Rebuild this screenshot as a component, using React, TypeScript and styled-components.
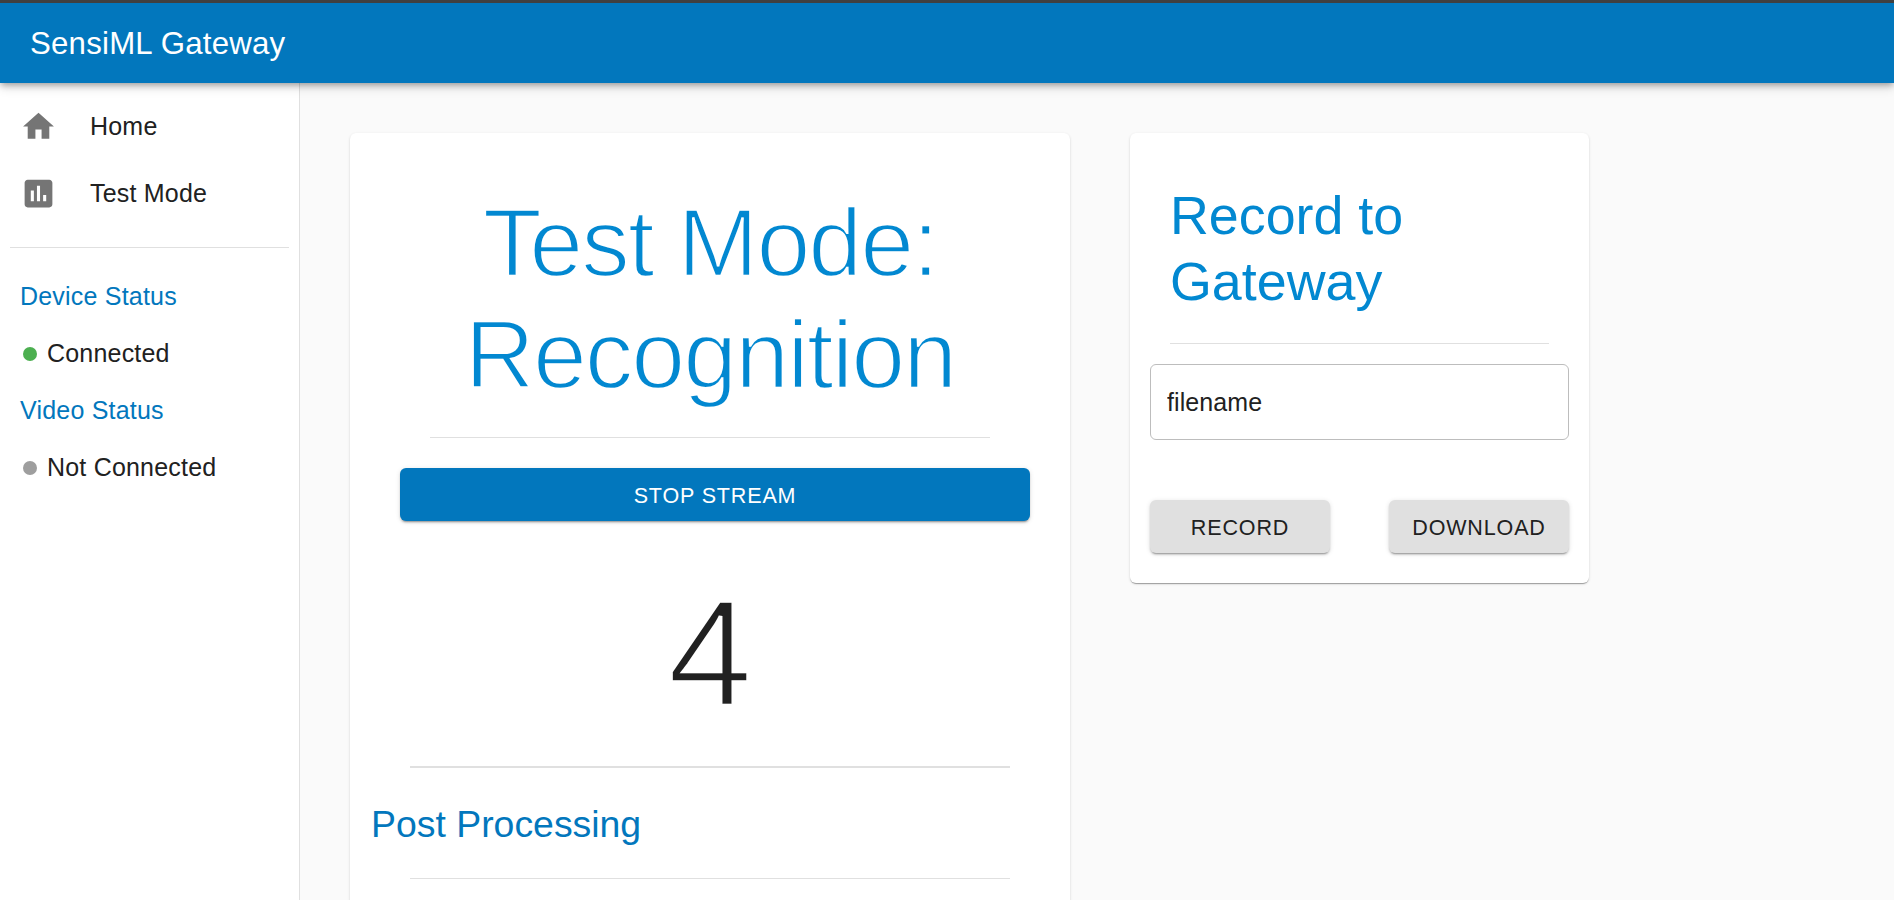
import styled, { createGlobalStyle } from 'styled-components';

const GlobalStyle = createGlobalStyle`
  html, body {
    margin: 0;
    height: 100%;
    overflow: hidden;
    background: #fafafa;
  }
  * {
    box-sizing: border-box;
  }
  body {
    font-family: "Liberation Sans", Arial, sans-serif;
    color: #212121;
  }
`;

const Page = styled.div`
  height: 900px;
  display: flex;
  flex-direction: column;
  overflow: hidden;
`;

const AppBar = styled.header`
  position: relative;
  z-index: 2;
  flex: none;
  height: 83px;
  display: flex;
  align-items: center;
  padding: 2px 30px 0;
  background: #0277bd;
  border-top: 3px solid #404040;
  box-shadow: 0 3px 6px -1px rgba(0, 0, 0, 0.3), 0 5px 10px rgba(0, 0, 0, 0.12);
`;

const AppTitle = styled.h6`
  margin: 0;
  font-size: 31.2px;
  font-weight: 400;
  letter-spacing: 0.23px;
  color: #fff;
`;

const Body = styled.div`
  flex: 1;
  display: flex;
  min-height: 0;
`;

const Sidebar = styled.nav`
  flex: none;
  width: 300px;
  padding: 10px 10px 0;
  background: #fff;
  border-right: 1px solid #e0e0e0;
`;

const NavItem = styled.a`
  height: 67px;
  display: flex;
  align-items: center;
  font-size: 25px;
  letter-spacing: 0.2px;
  color: #212121;

  svg {
    flex: none;
    width: 37px;
    height: 37px;
    margin-left: 10px;
    margin-right: 33px;
    fill: #757575;
  }
`;

const SideDivider = styled.hr`
  height: 1px;
  margin: 20px 0 20px;
  border: none;
  background: #e0e0e0;
`;

const StatusTitle = styled.div`
  height: 57px;
  display: flex;
  align-items: center;
  padding-left: 10px;
  font-size: 25px;
  letter-spacing: 0.2px;
  color: #0277bd;
`;

const StatusRow = styled.div`
  height: 57px;
  display: flex;
  align-items: center;
  gap: 10px;
  padding-left: 13px;
  font-size: 25px;
  letter-spacing: 0.2px;
`;

const Dot = styled.span<{ $color: string }>`
  width: 14px;
  height: 14px;
  border-radius: 50%;
  background: ${(p) => p.$color};
`;

const Content = styled.main`
  flex: 1;
  display: flex;
  align-items: flex-start;
  gap: 60px;
  padding: 50px 50px 0;
`;

const Card = styled.section`
  flex: none;
  background: #fff;
  border-radius: 6px;
  box-shadow: 0 2px 1px -1px rgba(0, 0, 0, 0.2), 0 1px 1px 0 rgba(0, 0, 0, 0.14), 0 1px 3px 0 rgba(0, 0, 0, 0.12);
`;

const MainCard = styled(Card)`
  width: 720px;
  height: 1000px;
  padding-top: 54px;
`;

const SideCard = styled(Card)`
  width: 459px;
  height: 450px;
  padding: 49px 20px 0;
`;

// Liberation Sans has no light cut, so a white stroke thins the big glyphs
const HeroTitle = styled.h1`
  margin: 0;
  text-align: center;
  font-size: 97px;
  line-height: 112px;
  font-weight: 400;
  letter-spacing: -2px;
  color: #0288d1;
  -webkit-text-stroke: 2.4px #fff;
`;

const Rule = styled.hr<{ $inset: number; $thick?: boolean }>`
  height: ${(p) => (p.$thick ? 2 : 1)}px;
  margin: 0 ${(p) => p.$inset}px;
  border: none;
  background: #e0e0e0;
`;

const HeroRule = styled(Rule)`
  margin-top: 26px;
`;

const StopButton = styled.button`
  display: block;
  width: 630px;
  height: 53px;
  margin: 30px 0 0 50px;
  padding: 3px 0 0;
  border: none;
  border-radius: 6px;
  background: #0277bd;
  color: #fff;
  font-family: inherit;
  font-size: 21.5px;
  letter-spacing: 0.85px;
  text-transform: uppercase;
  box-shadow: 0 3px 1px -2px rgba(0, 0, 0, 0.2), 0 2px 2px 0 rgba(0, 0, 0, 0.14), 0 1px 5px 0 rgba(0, 0, 0, 0.12);
`;

const Reading = styled.div`
  margin-top: 43px;
  margin-bottom: 25px;
  text-align: center;
  font-size: 153px;
  line-height: 177px;
  color: #212121;
  -webkit-text-stroke: 3.6px #fff;
`;

const SectionTitle = styled.h4`
  margin: 0;
  padding: 24px 0 0 21px;
  height: 110px;
  font-size: 37.4px;
  line-height: 64px;
  font-weight: 400;
  color: #0277bd;
`;

const RecordTitle = styled.h3`
  margin: 0;
  padding-left: 20px;
  font-size: 53.8px;
  line-height: 66px;
  font-weight: 400;
  color: #0288d1;
`;

const RecordRule = styled(Rule)`
  margin-top: 29px;
`;

const FileInput = styled.input`
  display: block;
  width: 100%;
  height: 76px;
  margin-top: 20px;
  padding: 0 16px;
  border: 1px solid #bdbdbd;
  border-radius: 6px;
  outline: none;
  background: #fff;
  color: #212121;
  font-family: inherit;
  font-size: 25px;
  letter-spacing: 0.1px;
`;

const ButtonRow = styled.div`
  display: flex;
  justify-content: space-between;
  margin-top: 60px;
`;

const GreyButton = styled.button`
  width: 180px;
  height: 53px;
  padding: 3px 0 0;
  border: none;
  border-radius: 6px;
  background: #e0e0e0;
  color: #212121;
  font-family: inherit;
  font-size: 21.5px;
  letter-spacing: 0.85px;
  text-transform: uppercase;
  box-shadow: 0 3px 1px -2px rgba(0, 0, 0, 0.2), 0 2px 2px 0 rgba(0, 0, 0, 0.14), 0 1px 5px 0 rgba(0, 0, 0, 0.12);
`;

export default function App() {
  return (
    <Page>
      <GlobalStyle />
      <AppBar>
        <AppTitle>SensiML Gateway</AppTitle>
      </AppBar>
      <Body>
        <Sidebar>
          <NavItem>
            <svg viewBox="0 0 24 24">
              <path d="M10 20v-6h4v6h5v-8h3L12 3 2 12h3v8z" />
            </svg>
            Home
          </NavItem>
          <NavItem>
            <svg viewBox="0 0 24 24">
              <path d="M19 3H5c-1.1 0-2 .9-2 2v14c0 1.1.9 2 2 2h14c1.1 0 2-.9 2-2V5c0-1.1-.9-2-2-2zM9 17H7v-7h2v7zm4 0h-2V7h2v10zm4 0h-2v-4h2v4z" />
            </svg>
            Test Mode
          </NavItem>
          <SideDivider />
          <StatusTitle>Device Status</StatusTitle>
          <StatusRow>
            <Dot $color="#4caf50" />
            Connected
          </StatusRow>
          <StatusTitle>Video Status</StatusTitle>
          <StatusRow>
            <Dot $color="#9e9e9e" />
            Not Connected
          </StatusRow>
        </Sidebar>
        <Content>
          <MainCard>
            <HeroTitle>
              Test Mode:
              <br />
              Recognition
            </HeroTitle>
            <HeroRule $inset={80} />
            <StopButton>Stop Stream</StopButton>
            <Reading>4</Reading>
            <Rule $inset={60} $thick />
            <SectionTitle>Post Processing</SectionTitle>
            <Rule $inset={60} />
          </MainCard>
          <SideCard>
            <RecordTitle>
              Record to
              <br />
              Gateway
            </RecordTitle>
            <RecordRule $inset={20} />
            <FileInput defaultValue="filename" />
            <ButtonRow>
              <GreyButton>Record</GreyButton>
              <GreyButton>Download</GreyButton>
            </ButtonRow>
          </SideCard>
        </Content>
      </Body>
    </Page>
  );
}
